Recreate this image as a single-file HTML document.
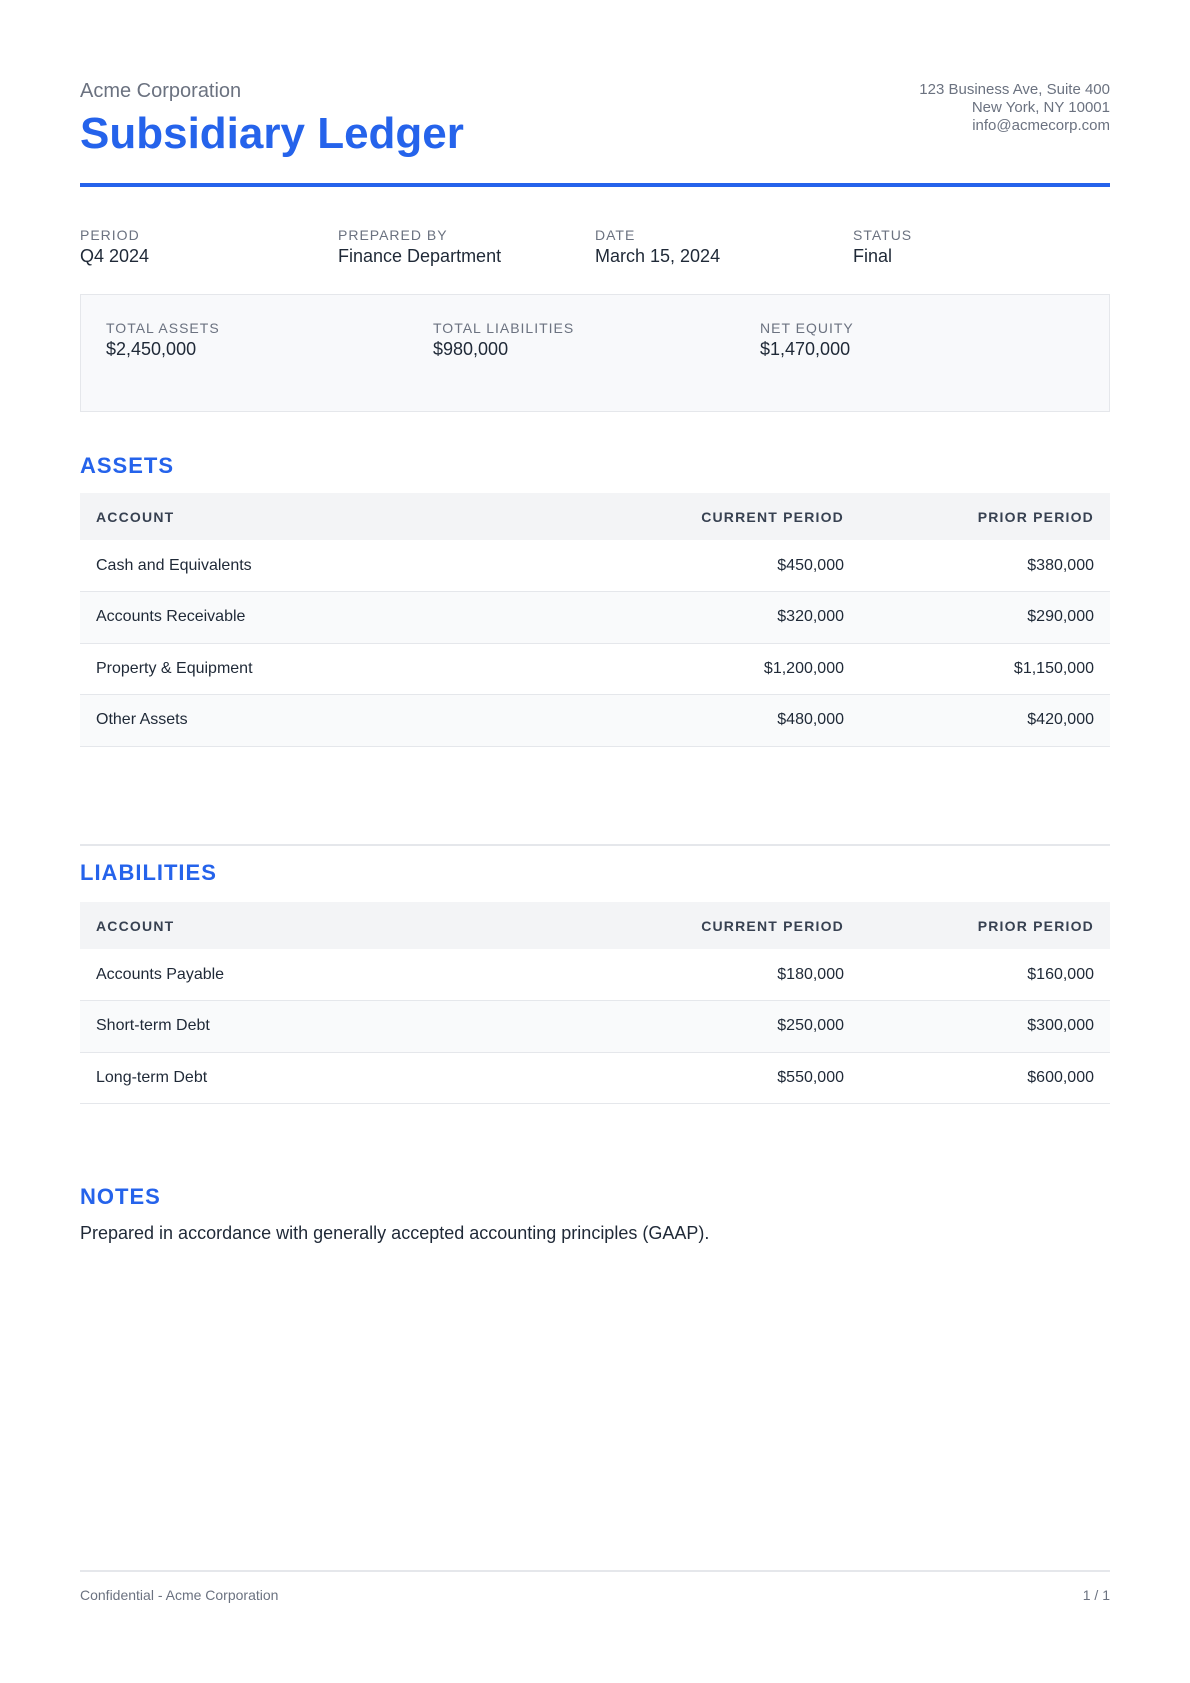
<!DOCTYPE html>
<html><head><meta charset="utf-8"><style>
*{margin:0;padding:0;box-sizing:border-box}
body{width:1190px;height:1683px;background:#fff;font-family:"Liberation Sans",sans-serif;color:#1f2937;position:relative}
.abs{position:absolute}
.co{left:80px;top:80px;font-size:20px;color:#6b7280}
.title{left:80px;top:109px;font-size:44px;font-weight:bold;color:#2563eb}
.addr{right:80px;top:81px;text-align:right;font-size:15px;line-height:18px;color:#6b7280}
.rule{left:80px;top:183px;width:1030px;height:4px;background:#2563eb}
.lbl{font-size:14px;letter-spacing:1px;color:#6b7280}
.val{font-size:18px;color:#1f2937;margin-top:3px}
.box{left:80px;top:294px;width:1030px;height:118px;background:#f8f9fb;border:1px solid #e5e7eb}
h2{position:absolute;left:80px;font-size:22px;font-weight:bold;color:#2563eb;letter-spacing:1px}
table{position:absolute;left:80px;width:1030px;border-collapse:collapse;font-size:16px}
th{height:47px;background:#f3f4f6;font-size:14px;letter-spacing:1.2px;color:#374151;text-align:left;padding:0 16px}
td{height:51.5px;border-bottom:1.5px solid #e5e7eb;padding:0 16px}
tr:nth-child(odd) td{background:#f9fafb}
.r{text-align:right}
</style></head><body>
<div class="abs co">Acme Corporation</div>
<div class="abs title">Subsidiary Ledger</div>
<div class="abs addr">123 Business Ave, Suite 400<br>New York, NY 10001<br>info@acmecorp.com</div>
<div class="abs rule"></div>
<div class="abs" style="left:80px;top:227px"><div class="lbl">PERIOD</div><div class="val">Q4 2024</div></div>
<div class="abs" style="left:338px;top:227px"><div class="lbl">PREPARED BY</div><div class="val">Finance Department</div></div>
<div class="abs" style="left:595px;top:227px"><div class="lbl">DATE</div><div class="val">March 15, 2024</div></div>
<div class="abs" style="left:853px;top:227px"><div class="lbl">STATUS</div><div class="val">Final</div></div>
<div class="abs box"></div>
<div class="abs" style="left:106px;top:320px"><div class="lbl">TOTAL ASSETS</div><div class="val">$2,450,000</div></div>
<div class="abs" style="left:433px;top:320px"><div class="lbl">TOTAL LIABILITIES</div><div class="val">$980,000</div></div>
<div class="abs" style="left:760px;top:320px"><div class="lbl">NET EQUITY</div><div class="val">$1,470,000</div></div>
<h2 style="top:453px">ASSETS</h2>
<table style="top:493px">
<tr><th>ACCOUNT</th><th class="r">CURRENT PERIOD</th><th class="r" style="width:250px">PRIOR PERIOD</th></tr>
<tr><td>Cash and Equivalents</td><td class="r">$450,000</td><td class="r">$380,000</td></tr>
<tr><td>Accounts Receivable</td><td class="r">$320,000</td><td class="r">$290,000</td></tr>
<tr><td>Property &amp; Equipment</td><td class="r">$1,200,000</td><td class="r">$1,150,000</td></tr>
<tr><td>Other Assets</td><td class="r">$480,000</td><td class="r">$420,000</td></tr>
</table>
<div class="abs" style="left:80px;top:844px;width:1030px;height:2px;background:#e5e7eb"></div>
<h2 style="top:860px">LIABILITIES</h2>
<table style="top:902px">
<tr><th>ACCOUNT</th><th class="r">CURRENT PERIOD</th><th class="r" style="width:250px">PRIOR PERIOD</th></tr>
<tr><td>Accounts Payable</td><td class="r">$180,000</td><td class="r">$160,000</td></tr>
<tr><td>Short-term Debt</td><td class="r">$250,000</td><td class="r">$300,000</td></tr>
<tr><td>Long-term Debt</td><td class="r">$550,000</td><td class="r">$600,000</td></tr>
</table>
<h2 style="top:1184px">NOTES</h2>
<div class="abs" style="left:80px;top:1223px;font-size:18px">Prepared in accordance with generally accepted accounting principles (GAAP).</div>
<div class="abs" style="left:80px;top:1570px;width:1030px;height:2px;background:#e5e7eb"></div>
<div class="abs" style="left:80px;top:1587px;font-size:14px;color:#6b7280">Confidential - Acme Corporation</div>
<div class="abs" style="right:80px;top:1587px;font-size:14px;color:#6b7280">1 / 1</div>
</body></html>
